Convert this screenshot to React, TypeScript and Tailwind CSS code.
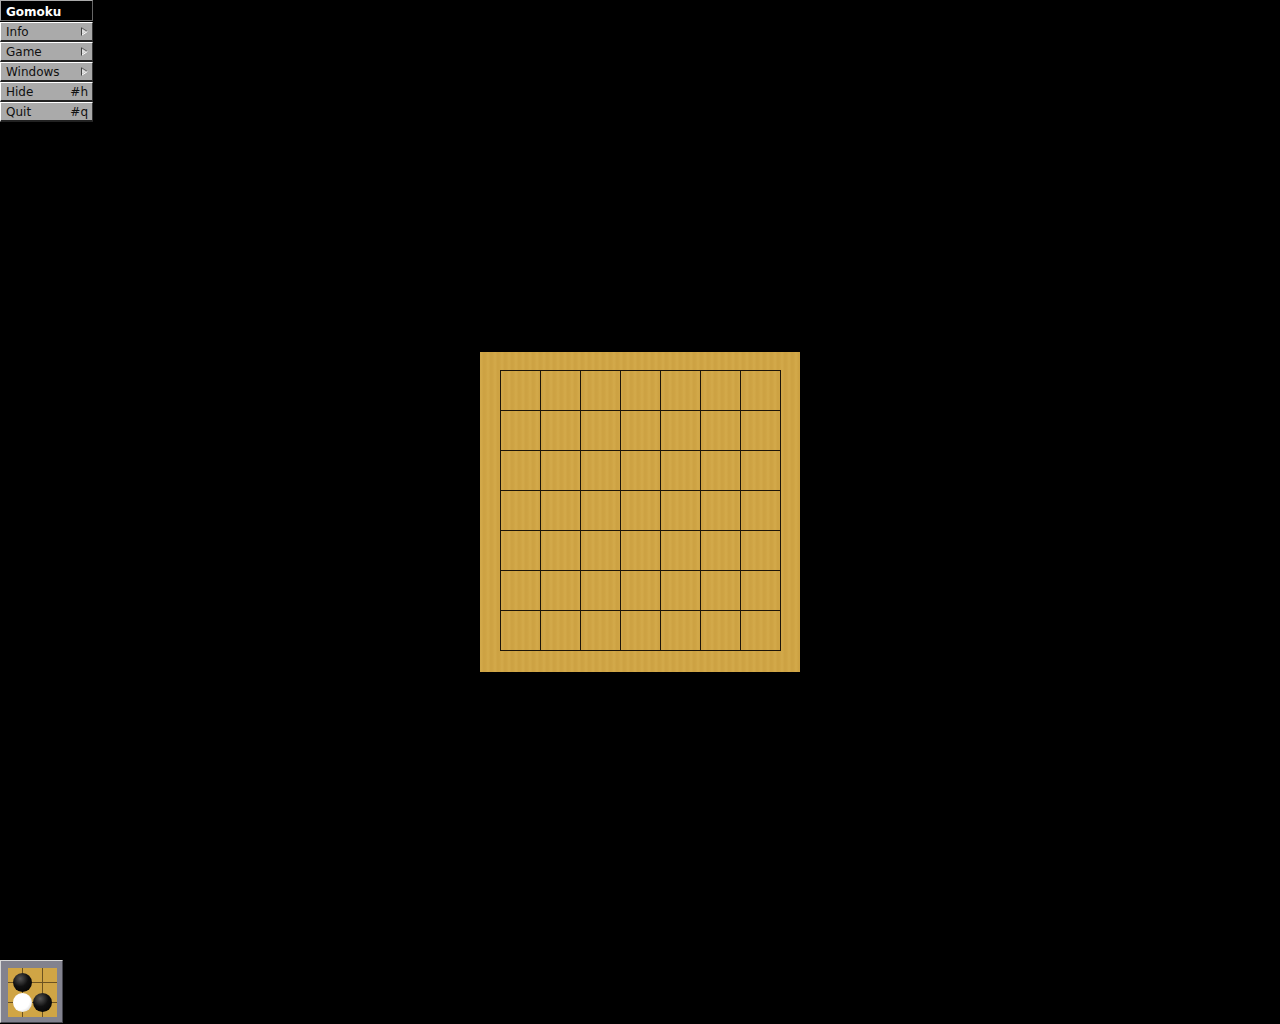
function Arrow() {
  return (
    <svg width="7" height="9" viewBox="0 0 7 9" className="block -mt-[2px]">
      <path d="M0.5 0.5V8.5" stroke="#444444" />
      <path d="M1 1L6.5 4.5" stroke="#666666" />
      <path d="M1 8L6.5 4.5" stroke="#ffffff" />
      <path d="M1 2L5 4.5L1 7Z" fill="#dddddd" />
    </svg>
  );
}

function Item({ label, right, arrow }: { label: string; right?: string; arrow?: boolean }) {
  return (
    <div className="h-5 w-[93px] flex items-center justify-between pl-[5px] pr-[4px] pt-[1px] bg-[#aaaaaa] border-t border-l border-t-white border-l-white border-b-2 border-r border-b-[#222222] border-r-[#333333] text-[12px] leading-none text-[#111111]">
      <span>{label}</span>
      {arrow ? <Arrow /> : <span>{right}</span>}
    </div>
  );
}

function Board() {
  const cells = Array.from({ length: 49 });
  return (
    <div className="w-80 h-80 bg-[#d0a545] bg-[repeating-linear-gradient(90deg,rgba(255,230,150,0.05)_0px,rgba(255,230,150,0.05)_2px,rgba(120,80,10,0.035)_3px,rgba(120,80,10,0.035)_5px,rgba(255,230,150,0.025)_7px)] flex items-center justify-center">
      <div className="grid grid-cols-[repeat(7,40px)] grid-rows-[repeat(7,40px)] border-t border-l border-[#1c1408] w-[281px] h-[281px] mt-[-4px]">
        {cells.map((_, i) => (
          <div key={i} className="border-r border-b border-[#1c1408]" />
        ))}
      </div>
    </div>
  );
}

function Stone({ white }: { white?: boolean }) {
  return (
    <div
      className={
        white
          ? "w-[19px] h-[19px] rounded-full bg-[radial-gradient(circle_at_40%_40%,#ffffff_55%,#bdbdbd)]"
          : "w-[19px] h-[19px] rounded-full bg-[radial-gradient(circle_at_38%_30%,#555555_0%,#111111_45%,#000000)]"
      }
    />
  );
}

function AppIcon() {
  return (
    <div className="w-[63px] h-[63px] mb-px bg-[#82828e] border-t border-l border-t-[#d8d8d8] border-l-[#d8d8d8] border-b border-r border-b-[#44444c] border-r-[#44444c] flex items-center justify-center">
      <div className="w-[49px] h-[49px] ml-[2px] mt-[2px] bg-[#d0a545] relative">
        <svg width="49" height="49" className="absolute inset-0">
          <path d="M14.5 0V49M34.5 0V49M0 14.5H49M0 34.5H49" stroke="#6b5220" strokeWidth="1" />
        </svg>
        <div className="absolute left-[5px] top-[5px]"><Stone /></div>
        <div className="absolute left-[5px] top-[25px]"><Stone white /></div>
        <div className="absolute left-[25px] top-[25px]"><Stone /></div>
      </div>
    </div>
  );
}

export default function App() {
  return (
    <div className="w-[1280px] h-[1024px] bg-black flex flex-col justify-between font-['DejaVu_Sans',sans-serif] relative overflow-hidden">
      <div className="w-[93px]">
        <div className="h-[21px] bg-black border border-t-[#aaaaaa] border-l-[#aaaaaa] border-b-[#666666] border-r-[#666666] text-white font-bold text-[12px] leading-none flex items-center pl-[5px] pt-[3px]">Gomoku</div>
        <div className="mt-px">
          <Item label="Info" arrow />
          <Item label="Game" arrow />
          <Item label="Windows" arrow />
          <Item label="Hide" right="#h" />
          <Item label="Quit" right="#q" />
        </div>
      </div>
      <div className="absolute left-[480px] top-[352px]"><Board /></div>
      <AppIcon />
    </div>
  );
}
